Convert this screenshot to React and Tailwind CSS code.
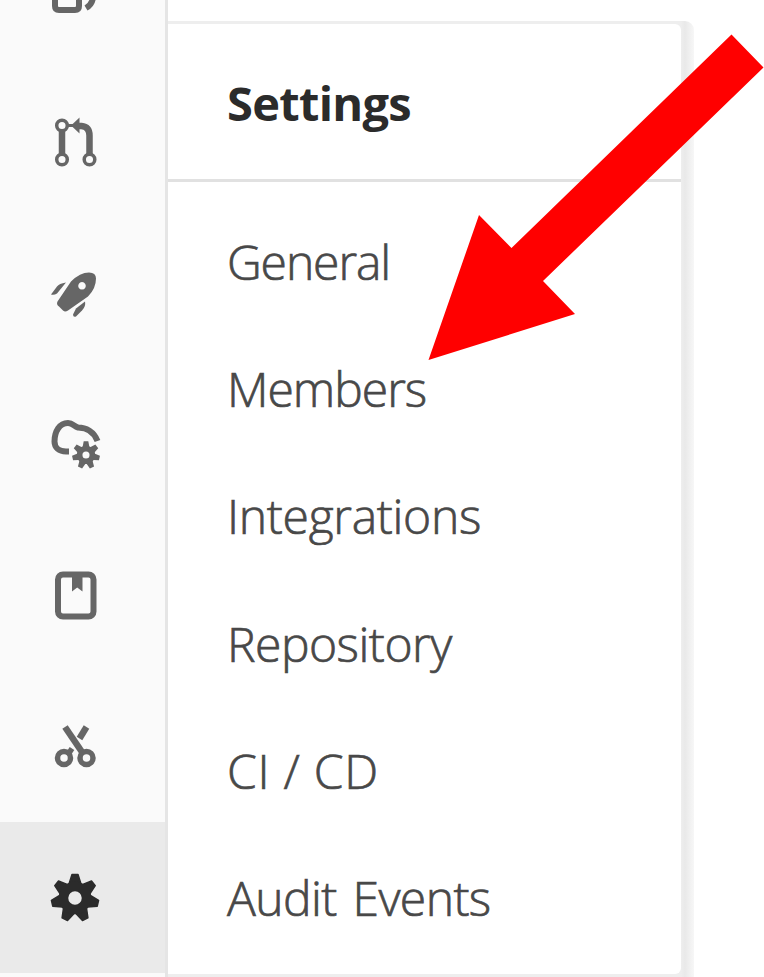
const gearPoints = (cx, cy, outer, inner, tip, base) => {
  const points = [];
  for (let i = 0; i < 7; i++) {
    const angle = (i * 2 * Math.PI) / 7 - Math.PI / 2;
    for (const [radius, offset] of [[inner, -base], [outer, -tip], [outer, tip], [inner, base]]) {
      const x = cx + radius * Math.cos(angle) - offset * Math.sin(angle);
      const y = cy + radius * Math.sin(angle) + offset * Math.cos(angle);
      points.push(`${x.toFixed(2)},${y.toFixed(2)}`);
    }
  }
  return points.join(' ');
};

function Icon({ top, children }) {
  return (
    <svg className="h-[60px] w-[60px]" viewBox={`45 ${top} 60 60`} fill="none" stroke="currentColor" strokeWidth="6">
      {children}
    </svg>
  );
}

const icons = [
  <Icon top={112.5}>
    <path d="M62 130v24M89.500 154v-19c0-6-3-9-8-9.500h-4" strokeWidth="6.500" />
    <path d="M67 125h6" strokeWidth="3" />
    <path d="M71 125l8.500-8v16z" fill="currentColor" stroke="none" />
    <g strokeWidth="3.500" fill="#fafafa">
      <circle cx="62" cy="125" r="5.300" />
      <circle cx="62" cy="159" r="5.300" />
      <circle cx="89.500" cy="159" r="5.300" />
    </g>
  </Icon>,
  <Icon top={263.5}>
    <g fill="currentColor" stroke="none">
      <path
        fillRule="evenodd"
        d="M57.500 301L71 281q9-9 18-9 7 0 7 6 0 10-8 18l-20 14q-3 2-5 0l-4-4q-3-2-1.500-5zM82 281.500a3.800 3.800 0 1 0 .01 0z"
      />
      <path d="M51 294l6-8q2-3 9-4l-9 11q-3 2-6 1z" />
      <path d="M73 314l3-6 9-7q1 5-3 9l-6 6q-3 1-3-2z" />
    </g>
  </Icon>,
  <Icon top={414.5}>
    <path d="M69 451h-3c-7 0-11.500-4-11.500-10 0-10 5-18.500 13.500-18.500 5 0 6 3.500 10 4.500 8 0 16 4 19.500 13.500" />
    <polygon points={gearPoints(86, 454.5, 13.8, 8.5, 2.3, 3.3)} fill="currentColor" stroke="none" />
    <circle cx="86" cy="454.500" r="6.300" strokeWidth="5.500" fill="#fafafa" />
  </Icon>,
  <Icon top={565.5}>
    <rect x="58" y="574" width="35.500" height="42" rx="5" />
    <path d="M72 573h10.500v18l-5.300-4-5.200 4z" fill="currentColor" stroke="none" />
  </Icon>,
  <Icon top={716.5}>
    <g strokeWidth="5.500">
      <circle cx="64" cy="757.500" r="6.500" />
      <circle cx="86.500" cy="757.500" r="6.500" />
      <path d="M65 726.500L83 753" strokeWidth="6.500" />
      <path d="M86.500 726.500L79.500 738" strokeWidth="6.500" />
      <path d="M72 748L68 754" />
    </g>
  </Icon>,
];

const items = [
  ['General', 'tracking-[-1.1px]'],
  ['Members', 'tracking-[-1px]'],
  ['Integrations', 'tracking-[-0.3px]'],
  ['Repository', 'tracking-[-0.5px]'],
  ['CI / CD', 'tracking-[0.7px]'],
  ['Audit Events', 'tracking-[-0.6px] [word-spacing:4px]'],
];

export default function App() {
  return (
    <div className="relative flex h-[977px] w-[764px] overflow-hidden bg-white font-['Open_Sans',sans-serif]">
      <nav className="flex w-[168px] shrink-0 flex-col border-r-[3px] border-[#e5e5e5] bg-[#fafafa] text-[#666]">
        <div className="flex h-[67px] shrink-0 items-start pl-[45px]">
          <Icon top={0}>
            <path d="M55 -8V6q0 4 4 4h16q4 0 4-4V-8" />
            <path d="M93 -4q0 8-7 12" />
          </Icon>
        </div>
        {icons.map((icon, i) => (
          <div key={i} className="flex h-[151px] shrink-0 items-center pl-[45px]">
            {icon}
          </div>
        ))}
        <div className="flex h-[151px] shrink-0 items-center bg-[#eaeaea] pl-[45px] text-[#2b2b2b]">
          <Icon top={868}>
            <polygon points={gearPoints(75, 898, 23.5, 14, 3, 6)} fill="currentColor" stroke="currentColor" strokeWidth="1.500" strokeLinejoin="round" />
            <circle cx="75" cy="898" r="11.500" strokeWidth="9.500" fill="#eaeaea" />
          </Icon>
        </div>
      </nav>

      <div className="flex w-[526px] shrink-0 flex-col pt-[21px]">
        <div className="grow rounded-tr-[9px] bg-linear-to-r from-[#eee] from-[513px] via-[#e9e9e9] via-[517px] to-[#f7f7f7] pt-[3px] pr-[13px] pb-[3px]">
          <div className="h-full rounded-r-[6px] bg-white">
            <h1 className="flex h-[158px] items-center border-b-[3px] border-[#e1e1e1] pt-[4px] pl-[59px] text-[47px] font-bold tracking-[-0.7px] text-[#2b2b2b]">
              Settings
            </h1>
            <ul className="flex flex-col pt-[16px] pl-[59px] text-[48px] font-light text-[#484848] [-webkit-text-stroke:0.7px_#484848]">
              {items.map(([label, tracking]) => (
                <li key={label} className="flex h-[127.300px] items-center">
                  <span className={tracking}>{label}</span>
                </li>
              ))}
            </ul>
          </div>
        </div>
      </div>

      <svg className="absolute inset-0 h-full w-full" viewBox="0 0 764 977">
        <polygon points="731.500,34.500 763.500,67.500 543,281 575,314 428.500,360 479,215 511.500,248" fill="#ff0000" />
      </svg>
    </div>
  );
}
